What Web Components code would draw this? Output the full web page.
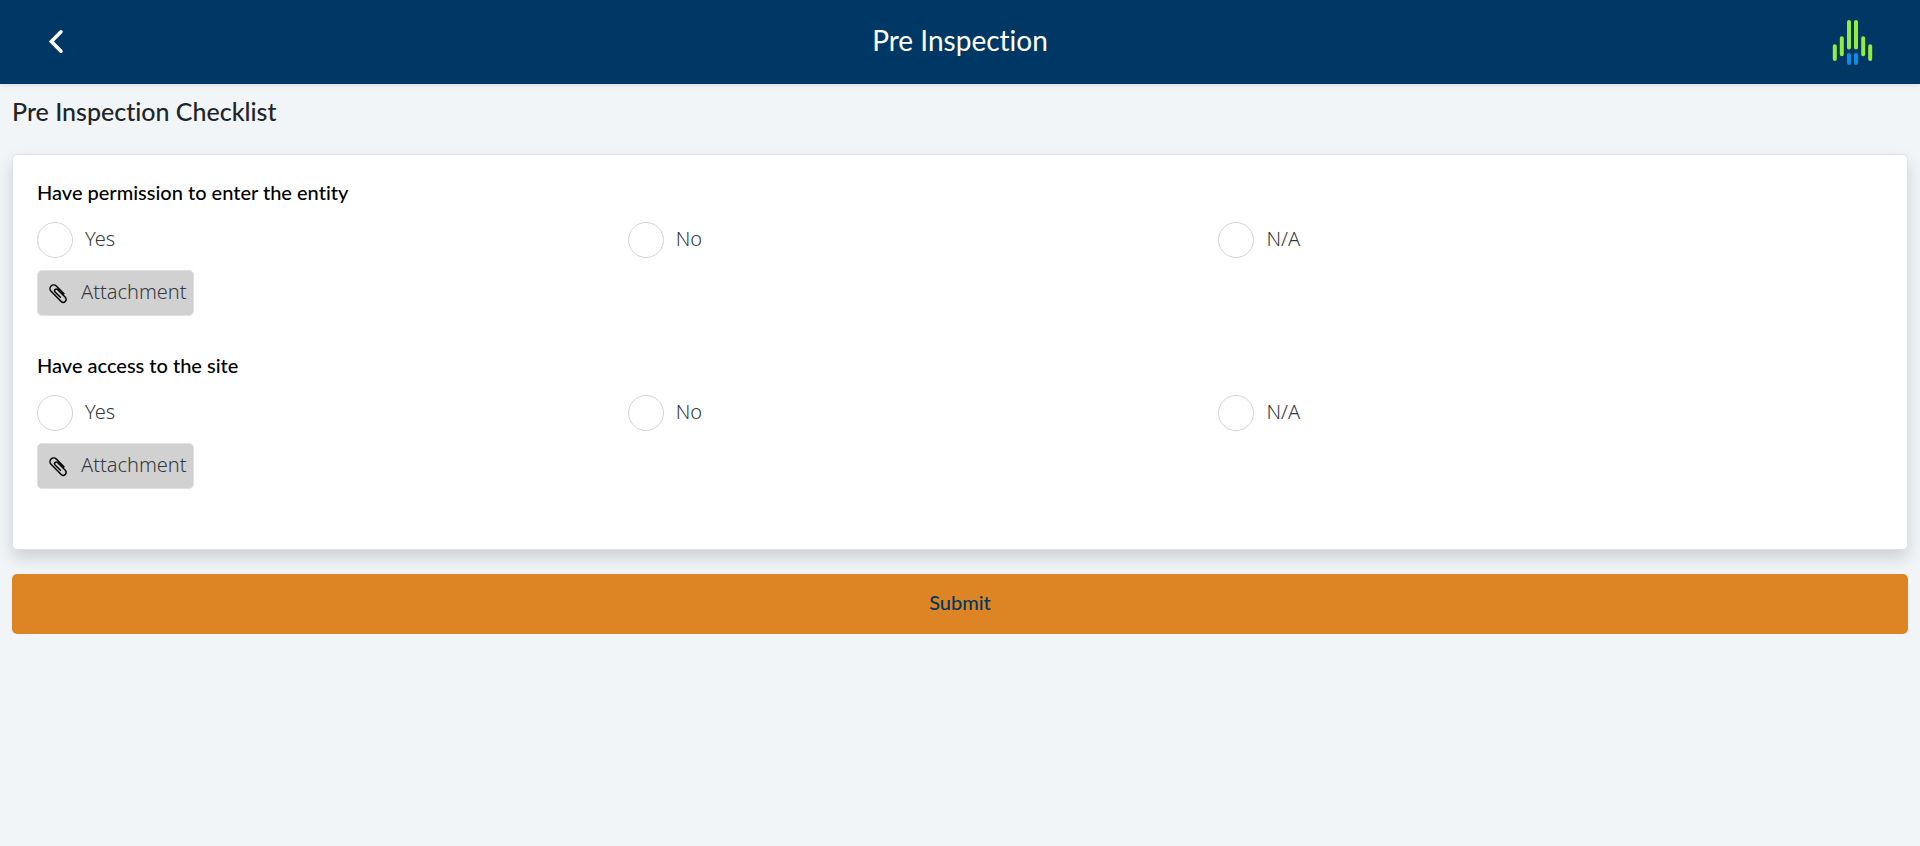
<!DOCTYPE html>
<html lang="en">
<head>
<meta charset="utf-8">
<meta name="viewport" content="width=device-width, initial-scale=1">
<title>Pre Inspection</title>
<style>
body { margin: 0; background: #f1f5f8; color: #212529; font-family: Lato, "Noto Sans", sans-serif; font-variant-ligatures: none; }
</style>
</head>
<body>
<inspection-page></inspection-page>

<template id="page-template">
  <style>
    :host { display: block; }
    main { padding: 12px; }
    h2 { margin: 0 0 27px; font-size: 25px; line-height: 31px; font-weight: 500; }
    checklist-card { margin-bottom: 24px; }
  </style>
  <app-header>Pre Inspection</app-header>
  <main>
    <h2>Pre Inspection Checklist</h2>
    <checklist-card>
      <checklist-question name="permission">Have permission to enter the entity</checklist-question>
      <checklist-question name="access">Have access to the site</checklist-question>
    </checklist-card>
    <submit-button>Submit</submit-button>
  </main>
</template>

<template id="header-template">
  <style>
    :host { display: block; }
    header { display: grid; grid-template-columns: 1fr auto 1fr; align-items: center; height: 84px; padding: 0 44px; background: #003865; color: #fff; box-shadow: 0 2px 4px rgba(0,0,0,.075); }
    h1 { margin: 0; padding-bottom: 4px; font-size: 28px; line-height: 40px; font-weight: 400; }
    button { display: flex; justify-self: start; padding: 0 0 2px; border: 0; background: none; color: inherit; cursor: pointer; }
    .logo { justify-self: end; display: block; }
  </style>
  <header>
    <button type="button" aria-label="Back">
      <svg width="24" height="26" viewBox="0 0 24 26" fill="none" stroke="currentColor" stroke-width="3.600" stroke-linecap="round"><path d="M17 3.800 7.400 13.500 17 23.200"/></svg>
    </button>
    <h1><slot></slot></h1>
    <svg class="logo" width="48" height="48" viewBox="0 0 48 48" role="img" aria-label="Company logo" fill="none" stroke-width="4" stroke-linecap="round">
      <path stroke="#93ed3e" d="M6.8 28.300v12.700M13.800 20.300v15.900M21 4v25.500M28 4v25.500M35.200 20.300v15.900M42.200 28.300v12.700"/>
      <path stroke="#118be3" d="M21 37v8M28 37v8"/>
    </svg>
  </header>
</template>

<template id="card-template">
  <style>
    :host { display: block; padding: 24px; background: #fff; border: 1px solid #dee2e6; border-radius: 5px; box-shadow: 0 8px 16px rgba(0,0,0,.15); }
  </style>
  <slot></slot>
</template>

<template id="question-template">
  <style>
    :host { display: block; margin-bottom: 36px; }
    fieldset { min-width: 0; margin: 0; padding: 0; border: 0; }
    legend { padding: 0; margin-bottom: 16px; font-size: 20px; line-height: 27px; font-weight: 500; color: #000; }
    .options { display: grid; grid-template-columns: repeat(3, 32%); margin-bottom: 12px; }
  </style>
  <fieldset>
    <legend><slot></slot></legend>
    <div class="options">
      <radio-option value="yes">Yes</radio-option>
      <radio-option value="no">No</radio-option>
      <radio-option value="na">N/A</radio-option>
    </div>
    <attachment-button>Attachment</attachment-button>
  </fieldset>
</template>

<template id="option-template">
  <style>
    :host { display: block; }
    label { display: flex; align-items: center; gap: 12px; width: max-content; font: 300 20px/34px "Noto Sans", "Open Sans", sans-serif; color: #343a40; cursor: pointer; }
    input { appearance: none; box-sizing: border-box; width: 36px; height: 36px; margin: 0; border: 1px solid #ced4da; border-radius: 50%; background: #fff; }
    input:checked { border: 10px solid #003865; }
    span { padding-bottom: 2px; }
  </style>
  <label><input type="radio"><span><slot></slot></span></label>
</template>

<template id="attachment-template">
  <style>
    :host { display: block; }
    button { display: flex; align-items: center; gap: 12px; height: 46px; padding: 0 6px 0 10px; border: 1px solid #dee2e6; border-radius: 5px; background: #d1d1d1; color: #343a40; font: 300 20px/34px "Noto Sans", "Open Sans", sans-serif; cursor: pointer; }
    span { padding-bottom: 2px; }
  </style>
  <button type="button">
    <svg width="21" height="21" viewBox="0 0 21 21" fill="none" stroke="#000" stroke-width="1.500" stroke-linecap="round" aria-hidden="true">
      <g transform="translate(10.500 10.500) rotate(45) translate(-11 -4.500)"><path d="M15 .8H4.200a3.700 3.700 0 0 0 0 7.400H18.500a2.900 2.900 0 0 0 0-5.800H7.500a1.700 1.700 0 0 0 0 3.400H15"/></g>
    </svg>
    <span><slot></slot></span>
  </button>
</template>

<template id="submit-template">
  <style>
    :host { display: block; }
    button { display: block; width: 100%; height: 60px; padding: 0 0 5px; border: 0; border-radius: 5px; background: #dd8524; color: #003865; font: 500 20px/28px Lato, "Noto Sans", sans-serif; cursor: pointer; }
  </style>
  <button type="submit"><slot></slot></button>
</template>

<script>
class TemplateElement extends HTMLElement {
  constructor() {
    super();
    this.attachShadow({ mode: "open" })
      .append(document.getElementById(this.constructor.template).content.cloneNode(true));
  }
}
class AppHeader extends TemplateElement { static template = "header-template"; }
class ChecklistCard extends TemplateElement { static template = "card-template"; }
class AttachmentButton extends TemplateElement { static template = "attachment-template"; }
class SubmitButton extends TemplateElement { static template = "submit-template"; }
class InspectionPage extends TemplateElement { static template = "page-template"; }

class RadioOption extends TemplateElement {
  static template = "option-template";
  connectedCallback() { this.input.value = this.getAttribute("value"); }
  get input() { return this.shadowRoot.querySelector("input"); }
  set checked(on) { this.input.checked = on; }
}

// Radios in separate shadow roots do not group natively, so the question keeps one choice.
class ChecklistQuestion extends TemplateElement {
  static template = "question-template";
  connectedCallback() {
    const options = [...this.shadowRoot.querySelectorAll("radio-option")];
    for (const option of options) {
      option.input.name = this.getAttribute("name");
      option.input.addEventListener("change", () => {
        for (const other of options) other.checked = other === option;
      });
    }
  }
}

customElements.define("app-header", AppHeader);
customElements.define("checklist-card", ChecklistCard);
customElements.define("radio-option", RadioOption);
customElements.define("attachment-button", AttachmentButton);
customElements.define("checklist-question", ChecklistQuestion);
customElements.define("submit-button", SubmitButton);
customElements.define("inspection-page", InspectionPage);
</script>
</body>
</html>
